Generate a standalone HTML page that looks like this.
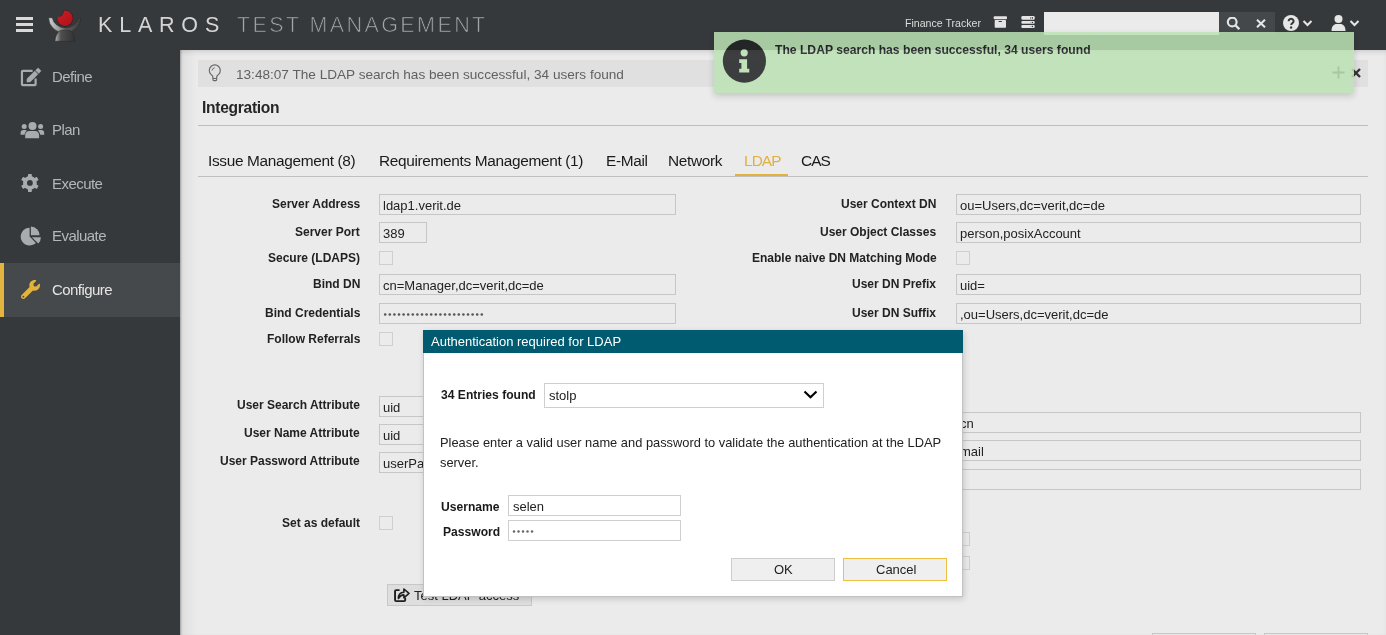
<!DOCTYPE html>
<html><head><meta charset="utf-8"><style>
html,body{margin:0;padding:0;width:1386px;height:635px;overflow:hidden;background:#ebebeb;}
body{position:relative;font-family:"Liberation Sans",sans-serif;}
.t{position:absolute;white-space:nowrap;line-height:1;will-change:transform;}
.r{position:absolute;}
</style></head><body>
<div class="r" style="left:180px;top:50px;width:1206px;height:585px;background:linear-gradient(to right,rgba(0,0,0,0.07),rgba(0,0,0,0.035) 6px,rgba(0,0,0,0) 17px),#ebebeb;box-shadow:inset 0 4px 7px -4px rgba(0,0,0,0.2),inset 2px 0 2px -1px rgba(0,0,0,0.25);"></div>
<div class="r" style="left:198px;top:60px;width:1170px;height:27px;background:#e0e0e0;"></div>
<svg class="r" style="left:202px;top:60px" width="28" height="28" viewBox="0 0 28 28"><path d="M10.9 16.8C10.7 15.9 9.7 15.1 8.8 14.2A5.5 5.5 0 1 1 16.8 14.2C15.9 15.1 14.9 15.9 14.7 16.8" fill="none" stroke="#666" stroke-width="1.15"/><path d="M10.9 16.5V19.6Q10.9 20.6 11.9 20.6H13.7Q14.7 20.6 14.7 19.6V16.5M10.9 18.5H14.7" fill="none" stroke="#666" stroke-width="1.1"/><path d="M10 10.6A3.2 3.2 0 0 1 12.7 7.8" fill="none" stroke="#666" stroke-width="0.9"/></svg>
<div class="t" style="left:235.5px;top:68.09px;font-size:13.6px;font-weight:400;color:#616161;">13:48:07 The LDAP search has been successful, 34 users found</div>
<svg class="r" style="left:1350px;top:67px" width="12" height="12" viewBox="0 0 12 12"><path d="M2 2L10 10M10 2L2 10" stroke="#333" stroke-width="2.4"/></svg>
<div class="t" style="left:201.8px;top:100.29px;font-size:15.6px;font-weight:700;color:#262626;letter-spacing:-0.3px;">Integration</div>
<div class="r" style="left:198px;top:125px;width:1170px;height:1px;background:#bdbdbd;"></div>
<div class="t" style="left:207.6px;top:152.96px;font-size:15.4px;font-weight:400;color:#1a1a1a;letter-spacing:-0.33px;">Issue Management (8)</div>
<div class="t" style="left:379px;top:152.96px;font-size:15.4px;font-weight:400;color:#1a1a1a;letter-spacing:-0.33px;">Requirements Management (1)</div>
<div class="t" style="left:605.7px;top:152.96px;font-size:15.4px;font-weight:400;color:#1a1a1a;letter-spacing:-0.33px;">E-Mail</div>
<div class="t" style="left:668px;top:152.96px;font-size:15.4px;font-weight:400;color:#1a1a1a;letter-spacing:-0.33px;">Network</div>
<div class="t" style="left:743.5px;top:152.96px;font-size:15.4px;font-weight:400;color:#e0b040;letter-spacing:-0.9px;">LDAP</div>
<div class="t" style="left:801px;top:152.96px;font-size:15.4px;font-weight:400;color:#1a1a1a;letter-spacing:-0.9px;">CAS</div>
<div class="r" style="left:198px;top:176px;width:1170px;height:1px;background:#c0c0c0;"></div>
<div class="r" style="left:735px;top:174px;width:53px;height:2px;background:#e2b23e;"></div>
<div class="t" style="right:1026px;top:197.84px;font-size:12px;font-weight:700;color:#222;">Server Address</div>
<div class="r" style="left:379px;top:194px;width:297px;height:21px;border:1px solid #c6c6c6;box-sizing:border-box;"></div>
<div class="t" style="left:383.2px;top:198.80px;font-size:13px;font-weight:400;color:#222;">ldap1.verit.de</div>
<div class="t" style="right:1026px;top:225.84px;font-size:12px;font-weight:700;color:#222;">Server Port</div>
<div class="r" style="left:379px;top:222px;width:48px;height:21px;border:1px solid #c6c6c6;box-sizing:border-box;"></div>
<div class="t" style="left:383.2px;top:226.80px;font-size:13px;font-weight:400;color:#222;">389</div>
<div class="t" style="right:1026px;top:251.84px;font-size:12px;font-weight:700;color:#222;">Secure (LDAPS)</div>
<div class="r" style="left:379px;top:251px;width:14px;height:14px;border:1px solid #cfcfcf;box-sizing:border-box;"></div>
<div class="t" style="right:1026px;top:277.84px;font-size:12px;font-weight:700;color:#222;">Bind DN</div>
<div class="r" style="left:379px;top:274px;width:297px;height:21px;border:1px solid #c6c6c6;box-sizing:border-box;"></div>
<div class="t" style="left:383.2px;top:278.80px;font-size:13px;font-weight:400;color:#222;">cn=Manager,dc=verit,dc=de</div>
<div class="t" style="right:1026px;top:306.84px;font-size:12px;font-weight:700;color:#222;">Bind Credentials</div>
<div class="r" style="left:379px;top:303px;width:297px;height:21px;border:1px solid #c6c6c6;box-sizing:border-box;"></div>
<div class="t" style="right:1026px;top:332.84px;font-size:12px;font-weight:700;color:#222;">Follow Referrals</div>
<div class="r" style="left:379px;top:332px;width:14px;height:14px;border:1px solid #cfcfcf;box-sizing:border-box;"></div>
<div class="t" style="right:1026px;top:399.34px;font-size:12px;font-weight:700;color:#222;">User Search Attribute</div>
<div class="r" style="left:379px;top:396px;width:297px;height:21px;border:1px solid #c6c6c6;box-sizing:border-box;"></div>
<div class="t" style="left:383.2px;top:400.80px;font-size:13px;font-weight:400;color:#222;">uid</div>
<div class="t" style="right:1026px;top:427.34px;font-size:12px;font-weight:700;color:#222;">User Name Attribute</div>
<div class="r" style="left:379px;top:424px;width:297px;height:21px;border:1px solid #c6c6c6;box-sizing:border-box;"></div>
<div class="t" style="left:383.2px;top:428.80px;font-size:13px;font-weight:400;color:#222;">uid</div>
<div class="t" style="right:1026px;top:455.34px;font-size:12px;font-weight:700;color:#222;">User Password Attribute</div>
<div class="r" style="left:379px;top:452px;width:297px;height:21px;border:1px solid #c6c6c6;box-sizing:border-box;"></div>
<div class="t" style="left:383.2px;top:456.80px;font-size:13px;font-weight:400;color:#222;">userPassword</div>
<div class="t" style="right:1026px;top:516.54px;font-size:12px;font-weight:700;color:#222;">Set as default</div>
<div class="r" style="left:379px;top:516px;width:14px;height:14px;border:1px solid #cfcfcf;box-sizing:border-box;"></div>
<div class="t" style="right:449.5px;top:197.84px;font-size:12px;font-weight:700;color:#222;">User Context DN</div>
<div class="r" style="left:956px;top:194px;width:405px;height:21px;border:1px solid #c6c6c6;box-sizing:border-box;"></div>
<div class="t" style="left:960.2px;top:198.80px;font-size:13px;font-weight:400;color:#222;">ou=Users,dc=verit,dc=de</div>
<div class="t" style="right:449.5px;top:225.84px;font-size:12px;font-weight:700;color:#222;">User Object Classes</div>
<div class="r" style="left:956px;top:222px;width:405px;height:21px;border:1px solid #c6c6c6;box-sizing:border-box;"></div>
<div class="t" style="left:960.2px;top:226.80px;font-size:13px;font-weight:400;color:#222;">person,posixAccount</div>
<div class="t" style="right:449.5px;top:251.84px;font-size:12px;font-weight:700;color:#222;">Enable naive DN Matching Mode</div>
<div class="r" style="left:956px;top:251px;width:14px;height:14px;border:1px solid #cfcfcf;box-sizing:border-box;"></div>
<div class="t" style="right:449.5px;top:277.84px;font-size:12px;font-weight:700;color:#222;">User DN Prefix</div>
<div class="r" style="left:956px;top:274px;width:405px;height:21px;border:1px solid #c6c6c6;box-sizing:border-box;"></div>
<div class="t" style="left:960.2px;top:278.80px;font-size:13px;font-weight:400;color:#222;">uid=</div>
<div class="t" style="right:449.5px;top:306.84px;font-size:12px;font-weight:700;color:#222;">User DN Suffix</div>
<div class="r" style="left:956px;top:303px;width:405px;height:21px;border:1px solid #c6c6c6;box-sizing:border-box;"></div>
<div class="t" style="left:960.2px;top:307.80px;font-size:13px;font-weight:400;color:#222;">,ou=Users,dc=verit,dc=de</div>
<div class="r" style="left:956px;top:412px;width:405px;height:21px;border:1px solid #c6c6c6;box-sizing:border-box;"></div>
<div class="t" style="left:960.2px;top:416.80px;font-size:13px;font-weight:400;color:#222;">cn</div>
<div class="r" style="left:956px;top:440px;width:405px;height:21px;border:1px solid #c6c6c6;box-sizing:border-box;"></div>
<div class="t" style="left:960.2px;top:444.80px;font-size:13px;font-weight:400;color:#222;">mail</div>
<div class="r" style="left:956px;top:469px;width:405px;height:21px;border:1px solid #c6c6c6;box-sizing:border-box;"></div>
<div class="r" style="left:956px;top:532px;width:14px;height:14px;border:1px solid #cfcfcf;box-sizing:border-box;"></div>
<div class="r" style="left:956px;top:556px;width:14px;height:14px;border:1px solid #cfcfcf;box-sizing:border-box;"></div>
<svg class="r" style="left:0;top:0" width="1386" height="635"><circle cx="385.20" cy="314.5" r="1.3" fill="#555"/><circle cx="389.80" cy="314.5" r="1.3" fill="#555"/><circle cx="394.40" cy="314.5" r="1.3" fill="#555"/><circle cx="399.00" cy="314.5" r="1.3" fill="#555"/><circle cx="403.60" cy="314.5" r="1.3" fill="#555"/><circle cx="408.20" cy="314.5" r="1.3" fill="#555"/><circle cx="412.80" cy="314.5" r="1.3" fill="#555"/><circle cx="417.40" cy="314.5" r="1.3" fill="#555"/><circle cx="422.00" cy="314.5" r="1.3" fill="#555"/><circle cx="426.60" cy="314.5" r="1.3" fill="#555"/><circle cx="431.20" cy="314.5" r="1.3" fill="#555"/><circle cx="435.80" cy="314.5" r="1.3" fill="#555"/><circle cx="440.40" cy="314.5" r="1.3" fill="#555"/><circle cx="445.00" cy="314.5" r="1.3" fill="#555"/><circle cx="449.60" cy="314.5" r="1.3" fill="#555"/><circle cx="454.20" cy="314.5" r="1.3" fill="#555"/><circle cx="458.80" cy="314.5" r="1.3" fill="#555"/><circle cx="463.40" cy="314.5" r="1.3" fill="#555"/><circle cx="468.00" cy="314.5" r="1.3" fill="#555"/><circle cx="472.60" cy="314.5" r="1.3" fill="#555"/><circle cx="477.20" cy="314.5" r="1.3" fill="#555"/><circle cx="481.80" cy="314.5" r="1.3" fill="#555"/></svg>
<div class="r" style="left:387px;top:584px;width:145px;height:22px;background:#dedede;border:1px solid #c8c8c8;box-sizing:border-box;"></div>
<svg class="r" style="left:394px;top:587px" width="17" height="16" viewBox="0 0 17 16"><path d="M4.9 3.1H2.2Q1.06 3.1 1.06 4.2V13Q1.06 14.15 2.2 14.15H10.1Q11.2 14.15 11.2 13V11.4" fill="none" stroke="#1e1e1e" stroke-width="1.9" stroke-linecap="round"/><path d="M4.4 11.5C4.3 7.8 6.5 5.4 9.9 5.2V2L15 6.4L9.9 10.8V7.9C7.5 8 5.8 9.3 4.4 11.5Z" fill="none" stroke="#1e1e1e" stroke-width="1.6" stroke-linejoin="round"/></svg><div class="t" style="left:414px;top:589.00px;font-size:13px;font-weight:400;color:#222;">Test LDAP access</div>
<div class="r" style="left:1152px;top:633px;width:104px;height:10px;background:#e6e6e6;border:1px solid #c8c8c8;box-sizing:border-box;"></div>
<div class="r" style="left:1264px;top:633px;width:104px;height:10px;background:#e6e6e6;border:1px solid #c8c8c8;box-sizing:border-box;"></div>
<div class="r" style="left:0px;top:0px;width:1386px;height:50px;background:#36393c;"></div>
<div class="r" style="left:16px;top:17px;width:17px;height:3px;background:#d9d9d9;"></div>
<div class="r" style="left:16px;top:23px;width:17px;height:3px;background:#d9d9d9;"></div>
<div class="r" style="left:16px;top:29px;width:17px;height:3px;background:#d9d9d9;"></div>
<svg class="r" style="left:44px;top:6px" width="44" height="40" viewBox="0 0 44 40">
<defs><linearGradient id="lg1" x1="0" x2="1"><stop offset="0" stop-color="#d0d0d0"/><stop offset="0.3" stop-color="#a0a0a0"/><stop offset="0.55" stop-color="#5a5a5a"/><stop offset="1" stop-color="#3c3c3c"/></linearGradient>
<linearGradient id="rg1" x1="0" y1="0" x2="1" y2="1"><stop offset="0" stop-color="#d01a22"/><stop offset="1" stop-color="#a8141c"/></linearGradient>
<linearGradient id="lg2" x1="0" x2="1"><stop offset="0" stop-color="#b8b8b8"/><stop offset="0.3" stop-color="#4e4e4e"/><stop offset="1" stop-color="#323232"/></linearGradient>
<mask id="bite"><rect width="44" height="40" fill="#fff"/><circle cx="13.4" cy="5" r="6.1" fill="#000"/></mask></defs>
<path d="M4.7 11.7 A16.1 15.2 0 0 0 36.9 11.7 L34.1 11.7 A13.1 12.4 0 0 1 8.3 11.7 Z" fill="url(#lg1)" stroke="#242628" stroke-width="0.5"/>
<path d="M11 35.3 C11.2 30.5 13 27.5 15.2 25 C18.5 23.6 23.5 23.6 26.8 25 C29 27.5 30.8 30.5 31 35.3 Z" fill="url(#lg2)" stroke="#242628" stroke-width="0.5"/>
<g mask="url(#bite)"><circle cx="21" cy="12.3" r="8.3" fill="#1f2022"/><circle cx="21" cy="12.3" r="7.8" fill="url(#rg1)"/></g>
<g mask="url(#bite)"></g>
<path d="M15.6 10.5 A6.1 6.1 0 0 0 19.4 4.6" fill="none" stroke="#1f2022" stroke-width="0.6"/>
</svg>
<div class="t" style="left:98px;top:14.80px;font-size:21.5px;font-weight:400;color:#d4d4d4;letter-spacing:6.8px;">KLAROS</div>
<div class="t" style="left:237px;top:14.80px;font-size:21.5px;font-weight:400;color:#a4a6a8;letter-spacing:2.4px;-webkit-text-stroke:0.7px #36393c;">TEST MANAGEMENT</div>
<div class="t" style="left:905px;top:18.03px;font-size:10.6px;font-weight:400;color:#dcdcdc;">Finance Tracker</div>
<svg class="r" style="left:993px;top:16px" width="16" height="13" viewBox="0 0 16 13"><rect x="0.7" y="0.3" width="13.3" height="2.9" rx="0.9" fill="#e4e4e4"/><rect x="1.7" y="4" width="11.3" height="7.8" rx="0.8" fill="#e4e4e4"/><rect x="5.5" y="5" width="3.5" height="1.1" rx="0.5" fill="#36393c"/></svg>
<svg class="r" style="left:1021px;top:16px" width="14" height="13" viewBox="0 0 14 13"><rect x="0.4" y="0" width="13.3" height="3.8" rx="1.2" fill="#e4e4e4"/><rect x="0.4" y="5" width="13.3" height="2.8" rx="1" fill="#e4e4e4"/><rect x="0.4" y="9" width="13.3" height="3" rx="1" fill="#e4e4e4"/><rect x="9.2" y="1" width="0.8" height="1.8" fill="#777"/><rect x="10.8" y="1" width="1" height="1.8" fill="#36393c"/><circle cx="11.4" cy="6.4" r="0.7" fill="#36393c"/><circle cx="9.8" cy="6.4" r="0.4" fill="#777"/><circle cx="11.4" cy="10.5" r="0.7" fill="#36393c"/><circle cx="9.8" cy="10.5" r="0.4" fill="#777"/></svg>
<div class="r" style="left:1044px;top:12px;width:175px;height:23px;background:#ebebeb;"></div>
<div class="r" style="left:1219px;top:12px;width:56px;height:22px;background:#45484b;"></div>
<svg class="r" style="left:1226px;top:17px" width="14" height="13" viewBox="0 0 14 13"><circle cx="6.2" cy="5.0" r="4.4" fill="none" stroke="#e6e6e6" stroke-width="2.1"/><path d="M9.4 8.3L13.3 12.2" stroke="#e6e6e6" stroke-width="2.3"/></svg>
<svg class="r" style="left:1256px;top:19px" width="10" height="9" viewBox="0 0 10 9"><path d="M1 0.7L9 8.3M9 0.7L1 8.3" stroke="#e6e6e6" stroke-width="2"/></svg>
<svg class="r" style="left:1283px;top:15px" width="30" height="16" viewBox="0 0 30 16"><circle cx="8" cy="8" r="8" fill="#e6e6e6"/><path d="M5.6 6.2 A2.5 2.4 0 1 1 9.4 8.2 C8.4 8.8 8.2 9.2 8.2 10" fill="none" stroke="#36393c" stroke-width="2"/><circle cx="8.1" cy="12.5" r="1.2" fill="#36393c"/><path d="M20.5 6L24.5 10L28.5 6" fill="none" stroke="#e6e6e6" stroke-width="2"/></svg>
<svg class="r" style="left:1331px;top:15px" width="30" height="16" viewBox="0 0 30 16"><circle cx="7.5" cy="4" r="4" fill="#e6e6e6"/><path d="M0.5 16 C0.5 11 3 9 5.5 9 H9.5 C12 9 14.5 11 14.5 16Z" fill="#e6e6e6"/><path d="M19.5 6L23.5 10L27.5 6" fill="none" stroke="#e6e6e6" stroke-width="2"/></svg>
<div class="r" style="left:0px;top:50px;width:180px;height:585px;background:#36393c;"></div>
<div class="r" style="left:0px;top:263px;width:180px;height:54px;background:#46494c;"></div>
<div class="r" style="left:0px;top:263px;width:4px;height:54px;background:#e2b33d;"></div>
<div class="t" style="left:52.4px;top:69.10px;font-size:15px;font-weight:400;color:#b4b6b8;letter-spacing:-0.55px;">Define</div>
<div class="t" style="left:52.4px;top:121.80px;font-size:15px;font-weight:400;color:#b4b6b8;letter-spacing:-0.55px;">Plan</div>
<div class="t" style="left:52.4px;top:175.60px;font-size:15px;font-weight:400;color:#b4b6b8;letter-spacing:-0.55px;">Execute</div>
<div class="t" style="left:52.4px;top:228.30px;font-size:15px;font-weight:400;color:#b4b6b8;letter-spacing:-0.55px;">Evaluate</div>
<div class="t" style="left:52.2px;top:282.00px;font-size:15px;font-weight:400;color:#e4e4e4;letter-spacing:-0.55px;">Configure</div>
<svg class="r" style="left:16px;top:63px" width="30" height="28" viewBox="0 0 30 28"><path d="M16.6 7.9H6.9Q5.95 7.9 5.95 8.85V21.15Q5.95 22.1 6.9 22.1H18.65Q19.6 22.1 19.6 21.15V15.4" fill="none" stroke="#a9abad" stroke-width="2.2"/><g fill="#a9abad" stroke="#a9abad" stroke-width="0.5" stroke-linejoin="round"><path d="M10.9 19.1L11.1 15.8L18.8 8.1L21.9 11.2L14.2 18.9Z"/><path d="M19.6 7.3L21.4 5.5Q22.1 4.8 22.8 5.5L24.5 7.2Q25.2 7.9 24.5 8.6L22.7 10.4Z"/></g></svg>
<svg class="r" style="left:20px;top:121px" width="26" height="20" viewBox="0 0 26 20"><g fill="#a9abad"><circle cx="12.5" cy="4.9" r="4"/><circle cx="4.2" cy="5.6" r="2.5"/><circle cx="20.6" cy="5.6" r="2.5"/><path d="M5.2 17.2V14.2C5.2 11.6 6.8 9.9 9.2 9.9H15.1C17.5 9.9 19.1 11.6 19.1 14.2V17.2Z"/><path d="M0.6 13.7V12C0.6 10 1.6 8.9 3.4 8.9H5.2C5.9 8.9 6.4 9.1 6.9 9.4C5.6 10.5 4.8 11.9 4.6 13.7Z"/><path d="M24.2 13.7V12C24.2 10 23.2 8.9 21.4 8.9H19.6C18.9 8.9 18.4 9.1 17.9 9.4C19.2 10.5 20 11.9 20.2 13.7Z"/></g></svg>
<svg class="r" style="left:19px;top:172px" width="22" height="22" viewBox="0 0 22 22"><g fill="#a9abad"><circle cx="10.9" cy="10.9" r="6.9"/><rect x="9" y="1.9" width="3.8" height="4" rx="0.6" transform="rotate(0 10.9 10.9)"/><rect x="9" y="1.9" width="3.8" height="4" rx="0.6" transform="rotate(60 10.9 10.9)"/><rect x="9" y="1.9" width="3.8" height="4" rx="0.6" transform="rotate(120 10.9 10.9)"/><rect x="9" y="1.9" width="3.8" height="4" rx="0.6" transform="rotate(180 10.9 10.9)"/><rect x="9" y="1.9" width="3.8" height="4" rx="0.6" transform="rotate(240 10.9 10.9)"/><rect x="9" y="1.9" width="3.8" height="4" rx="0.6" transform="rotate(300 10.9 10.9)"/></g><circle cx="10.9" cy="10.9" r="2.9" fill="#36393c"/></svg>
<svg class="r" style="left:17px;top:222px" width="28" height="28" viewBox="0 0 28 28"><g fill="#a9abad"><path d="M12.6 14.6V5.7A8.9 8.9 0 1 0 18.9 20.9Z"/><path d="M13.9 13.3V4.6A8.7 8.7 0 0 1 22.6 13.3Z"/><path d="M14.9 15.2H23.9A9 9 0 0 1 21.3 21.6Z"/></g></svg>
<svg class="r" style="left:20.6px;top:279.6px" width="19" height="19" viewBox="0 0 512 512"><path fill="#e2b33d" fill-rule="evenodd" d="M507.73 109.1c-2.24-9.03-13.54-12.09-20.12-5.510l-74.360 74.360-67.880-11.310-11.310-67.880 74.360-74.360c6.620-6.620 3.430-17.900-5.660-20.160-47.380-11.740-99.550.910-136.580 37.930-39.640 39.640-50.550 97.100-34.050 147.200L18.740 402.760c-24.990 24.990-24.990 65.510 0 90.500 24.990 24.990 65.510 24.990 90.500 0l213.210-213.210c50.120 16.710 107.470 5.680 147.370-34.220 37.070-37.070 49.700-89.320 37.910-136.730zM64 472c-13.250 0-24-10.750-24-24 0-13.260 10.750-24 24-24s24 10.740 24 24c0 13.250-10.750 24-24 24z"/></svg>
<div class="r" style="left:714px;top:32px;width:640px;height:61px;opacity:0.86;box-shadow:0 3px 7px rgba(0,0,0,0.2);background:#bce2b5;"><svg class="r" style="left:8px;top:7px" width="44" height="44" viewBox="0 0 44 44"><circle cx="22.4" cy="22.1" r="21.6" fill="#212225"/><circle cx="22.2" cy="13.8" r="3.6" fill="#bce2b5"/><path d="M17.2 20.2H25.1V29.7H27.3V33.6H17.2V29.7H19.4V24H17.2Z" fill="#bce2b5"/></svg><div class="t" style="left:61px;top:11.72px;font-size:12.15px;font-weight:700;color:#1e1f22;">The LDAP search has been successful, 34 users found</div>
<svg class="r" style="left:618px;top:34px" width="13" height="13" viewBox="0 0 13 13"><path d="M6.5 0.5V12.5M0.5 6.5H12.5" stroke="#9cc394" stroke-width="1.8"/></svg></div>
<div class="r" style="left:423px;top:330px;width:540px;height:267px;background:#fff;border:1px solid #c2c2c2;box-sizing:border-box;box-shadow:1px 2px 6px rgba(0,0,0,0.16);"></div>
<div class="r" style="left:423px;top:330px;width:540px;height:23px;background:#005a70;"></div>
<div class="t" style="left:431px;top:335.00px;font-size:13px;font-weight:400;color:#ffffff;">Authentication required for LDAP</div>
<div class="t" style="left:440.7px;top:388.96px;font-size:12.1px;font-weight:700;color:#1a1a1a;">34 Entries found</div>
<div class="r" style="left:544px;top:383px;width:280px;height:25px;border:1px solid #cfcfcf;box-sizing:border-box;background:#fff;"></div>
<div class="t" style="left:549px;top:389.30px;font-size:13px;font-weight:400;color:#222;">stolp</div>
<svg class="r" style="left:803px;top:390px" width="15" height="9" viewBox="0 0 15 9"><path d="M1.5 1.5L7.5 7.2L13.5 1.5" fill="none" stroke="#000" stroke-width="2.2"/></svg>
<div class="t" style="left:439.5px;top:437.11px;font-size:12.87px;font-weight:400;color:#222;">Please enter a valid user name and password to validate the authentication at the LDAP</div>
<div class="t" style="left:439.5px;top:457.11px;font-size:12.87px;font-weight:400;color:#222;">server.</div>
<div class="t" style="left:440.7px;top:501.06px;font-size:12.1px;font-weight:700;color:#1a1a1a;">Username</div>
<div class="t" style="left:442.7px;top:526.26px;font-size:12.1px;font-weight:700;color:#1a1a1a;">Password</div>
<div class="r" style="left:508px;top:495px;width:173px;height:21px;border:1px solid #cfcfcf;box-sizing:border-box;"></div>
<div class="t" style="left:512.5px;top:500.00px;font-size:13px;font-weight:400;color:#222;">selen</div>
<div class="r" style="left:508px;top:520px;width:173px;height:21px;border:1px solid #cfcfcf;box-sizing:border-box;"></div>
<svg class="r" style="left:0;top:0" width="1386" height="635"><circle cx="514.00" cy="531.5" r="1.25" fill="#666"/><circle cx="518.50" cy="531.5" r="1.25" fill="#666"/><circle cx="523.00" cy="531.5" r="1.25" fill="#666"/><circle cx="527.50" cy="531.5" r="1.25" fill="#666"/><circle cx="532.00" cy="531.5" r="1.25" fill="#666"/></svg>
<div class="r" style="left:731px;top:558px;width:104px;height:23px;background:#efefef;border:1px solid #cdcdcd;box-sizing:border-box;"></div>
<div class="t" style="left:774px;top:563.00px;font-size:13px;font-weight:400;color:#222;">OK</div>
<div class="r" style="left:843px;top:558px;width:104px;height:23px;background:#efefef;border:1px solid #f0c040;box-sizing:border-box;"></div>
<div class="t" style="left:875.5px;top:563.00px;font-size:13px;font-weight:400;color:#222;">Cancel</div>
</body></html>
